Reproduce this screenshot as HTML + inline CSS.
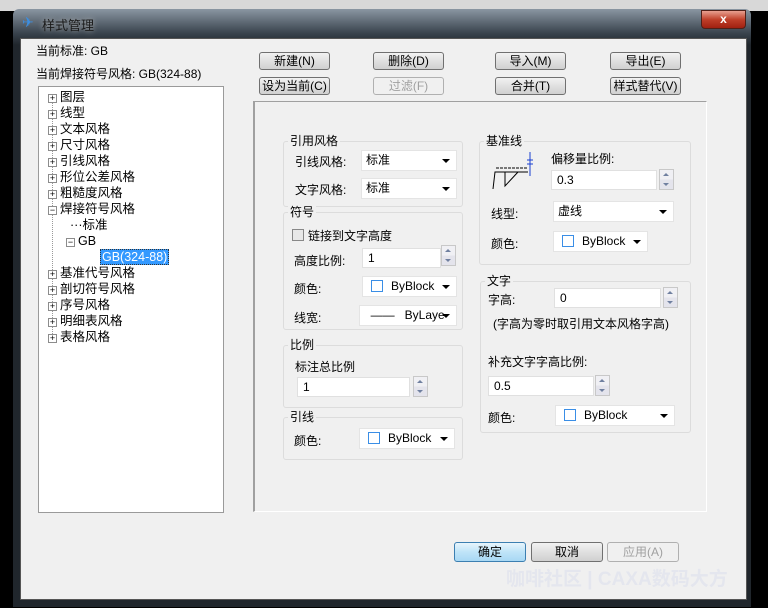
<!DOCTYPE html><html><head><meta charset="utf-8"><style>
*{margin:0;padding:0;box-sizing:border-box}
body{width:768px;height:608px;overflow:hidden;background:#000;position:relative;font:12px "Liberation Sans","Noto Sans CJK SC",sans-serif;color:#000}
.a{position:absolute;white-space:nowrap}
.btn{position:absolute;height:18px;border:1px solid #707070;border-radius:3px;background:linear-gradient(#f2f2f2,#e0e0e0 50%,#d0d0d0);text-align:center;line-height:16px}
.dis{color:#a0a0a0;border-color:#b0b0b0;background:#f0f0f0}
.grp{position:absolute;border:1px solid #dcdcdc;border-radius:3px}
.gt{position:absolute;background:#f0f0f0;padding:0 2px;top:-9px;left:4px;line-height:16px}
.cb{position:absolute;height:21px;background:#fff;border:1px solid #e4e4e4;line-height:19px;padding-left:4px}
.cb:after{content:"";position:absolute;right:6px;top:8px;border:4px solid transparent;border-top:4px solid #000;border-bottom:0}
.ed{position:absolute;height:20px;background:#fff;border:1px solid #e0e0e0;line-height:18px;padding-left:5px}
.sp{position:absolute;width:15px;height:21px;border:1px solid #c8c8c8;background:linear-gradient(#f0f0f4 50%,#e4e4ec 50%)}
.sp:before{content:"";position:absolute;left:3px;top:3px;border:3px solid transparent;border-bottom:3px solid #7080a0;border-top:0}
.sp:after{content:"";position:absolute;left:3px;top:13px;border:3px solid transparent;border-top:3px solid #7080a0;border-bottom:0}
.sq{display:inline-block;width:12px;height:12px;border:1px solid #3a8ee6;vertical-align:-2px;margin:0 8px 0 4px}
.pl{display:inline-block;width:9px;height:9px;border:1px solid #8c8c8c;background:#fff;font-size:9px;line-height:7px;text-align:center;margin-right:3px;vertical-align:0}
</style></head><body>
<div class="a" style="left:0;top:0;width:768px;height:11px;background:#d8d8d8"></div>
<div class="a" style="left:13px;top:9px;width:738px;height:598px;background:linear-gradient(#8a96a2,#3a444e 4%,#20262c 6%);border-radius:6px 6px 0 0"></div>
<div class="a" style="left:22px;top:14px;width:16px;height:16px;color:#3c8ee0;font-size:14px">✈</div>
<div class="a" style="left:42px;top:15px;color:#1a1a1a;font-size:13px;text-shadow:0 0 6px #bbb">样式管理</div>
<div class="a" style="left:701px;top:10px;width:45px;height:19px;background:linear-gradient(#e8a090,#c0402a 50%,#a02010);border:1px solid #502018;border-radius:0 0 4px 4px;color:#fff;text-align:center;font-weight:bold;line-height:17px">x</div>
<div class="a" style="left:20px;top:38px;width:727px;height:562px;background:#f0f0f0;border:1px solid #555"></div>
<div class="a" style="left:36px;top:42px">当前标准: GB</div>
<div class="a" style="left:36px;top:65px">当前焊接符号风格: GB(324-88)</div>
<div class="a" style="left:38px;top:86px;width:186px;height:427px;background:#fff;border:1px solid #9a9a9a"></div>
<div class="a" style="left:52px;top:100px;height:240px;border-left:1px dotted #999"></div>
<div class="a" style="left:48px;top:89px;line-height:16px;font-size:12.5px">
<div><span class="pl">+</span>图层</div><div><span class="pl">+</span>线型</div><div><span class="pl">+</span>文本风格</div><div><span class="pl">+</span>尺寸风格</div><div><span class="pl">+</span>引线风格</div><div><span class="pl">+</span>形位公差风格</div><div><span class="pl">+</span>粗糙度风格</div><div><span class="pl">−</span>焊接符号风格</div>
<div style="padding-left:22px">···标准</div><div style="padding-left:18px"><span class="pl">−</span>GB</div>
<div style="padding-left:52px"><span style="background:#3399ff;color:#fff;border:1px dotted #333;padding:0 1px">GB(324-88)</span></div>
<div><span class="pl">+</span>基准代号风格</div><div><span class="pl">+</span>剖切符号风格</div><div><span class="pl">+</span>序号风格</div><div><span class="pl">+</span>明细表风格</div><div><span class="pl">+</span>表格风格</div></div>
<div class="btn" style="left:259px;top:52px;width:71px">新建(N)</div>
<div class="btn" style="left:373px;top:52px;width:71px">删除(D)</div>
<div class="btn" style="left:495px;top:52px;width:71px">导入(M)</div>
<div class="btn" style="left:610px;top:52px;width:71px">导出(E)</div>
<div class="btn" style="left:259px;top:77px;width:71px">设为当前(C)</div>
<div class="btn dis" style="left:373px;top:77px;width:71px">过滤(F)</div>
<div class="btn" style="left:495px;top:77px;width:71px">合并(T)</div>
<div class="btn" style="left:610px;top:77px;width:71px">样式替代(V)</div>
<div class="a" style="left:253px;top:101px;width:454px;height:411px;border:1px solid #fff;border-top-color:#a0a0a0;border-left:2px solid #a0a0a0"></div>
<div class="grp" style="left:283px;top:141px;width:180px;height:66px"><span class="gt">引用风格</span></div>
<div class="a" style="left:295px;top:153px">引线风格:</div><div class="cb" style="left:361px;top:150px;width:96px">标准</div>
<div class="a" style="left:295px;top:181px">文字风格:</div><div class="cb" style="left:361px;top:178px;width:96px">标准</div>
<div class="grp" style="left:283px;top:212px;width:180px;height:118px"><span class="gt">符号</span></div>
<div class="a" style="left:292px;top:229px;width:12px;height:12px;border:1px solid #888;background:#e8e8e8"></div>
<div class="a" style="left:308px;top:227px">链接到文字高度</div>
<div class="a" style="left:294px;top:252px">高度比例:</div><div class="ed" style="left:362px;top:248px;width:79px">1</div><div class="sp" style="left:441px;top:245px"></div>
<div class="a" style="left:294px;top:280px">颜色:</div><div class="cb" style="left:362px;top:276px;width:95px"><span class="sq"></span>ByBlock</div>
<div class="a" style="left:294px;top:309px">线宽:</div><div class="cb" style="left:359px;top:305px;width:98px">&nbsp;&nbsp;——&nbsp;&nbsp; ByLaye</div>
<div class="grp" style="left:283px;top:345px;width:180px;height:63px"><span class="gt">比例</span></div>
<div class="a" style="left:295px;top:358px">标注总比例</div><div class="ed" style="left:297px;top:377px;width:113px">1</div><div class="sp" style="left:413px;top:376px"></div>
<div class="grp" style="left:283px;top:417px;width:180px;height:43px"><span class="gt">引线</span></div>
<div class="a" style="left:294px;top:432px">颜色:</div><div class="cb" style="left:359px;top:428px;width:96px"><span class="sq"></span>ByBlock</div>
<div class="grp" style="left:479px;top:141px;width:212px;height:124px"><span class="gt">基准线</span></div>
<svg class="a" style="left:488px;top:146px" width="48" height="46"><path d="M5 43 L7 26 H40" stroke="#000" fill="none"/><path d="M8 22 H40" stroke="#000" stroke-dasharray="3 1" fill="none"/><path d="M17 26 V40 L30 26" stroke="#000" fill="none"/><path d="M42 6 V30 M39 14 H45 M39 18 H45" stroke="#1a3fd0" fill="none"/></svg>
<div class="a" style="left:551px;top:150px">偏移量比例:</div><div class="ed" style="left:551px;top:170px;width:106px">0.3</div><div class="sp" style="left:659px;top:169px"></div>
<div class="a" style="left:491px;top:205px">线型:</div><div class="cb" style="left:553px;top:201px;width:121px">虚线</div>
<div class="a" style="left:491px;top:235px">颜色:</div><div class="cb" style="left:553px;top:231px;width:95px"><span class="sq"></span>ByBlock</div>
<div class="grp" style="left:480px;top:281px;width:211px;height:152px"><span class="gt">文字</span></div>
<div class="a" style="left:488px;top:291px">字高:</div><div class="ed" style="left:554px;top:288px;width:107px">0</div><div class="sp" style="left:663px;top:287px"></div>
<div class="a" style="left:493px;top:315px">(字高为零时取引用文本风格字高)</div>
<div class="a" style="left:488px;top:353px">补充文字字高比例:</div><div class="ed" style="left:488px;top:376px;width:106px">0.5</div><div class="sp" style="left:595px;top:375px"></div>
<div class="a" style="left:488px;top:409px">颜色:</div><div class="cb" style="left:555px;top:405px;width:120px"><span class="sq"></span>ByBlock</div>
<div class="btn" style="left:454px;top:542px;width:72px;height:20px;line-height:18px;border-color:#3c7fb1;background:linear-gradient(#e8f5fc,#bfe4f8 50%,#a8d8f4)">确定</div>
<div class="btn" style="left:531px;top:542px;width:72px;height:20px;line-height:18px">取消</div>
<div class="btn dis" style="left:607px;top:542px;width:72px;height:20px;line-height:18px">应用(A)</div>
<div class="a" style="left:506px;top:564px;font-size:19px;font-weight:bold;color:#e4e6ee">咖啡社区 | CAXA数码大方</div>
</body></html>
